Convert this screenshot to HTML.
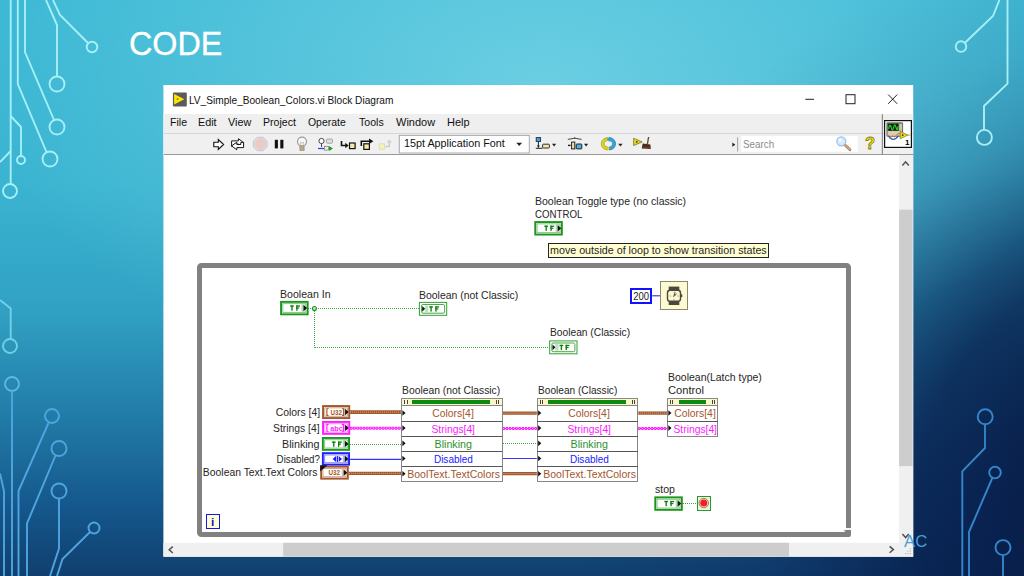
<!DOCTYPE html>
<html><head><meta charset="utf-8"><title>CODE</title>
<style>
html,body{margin:0;padding:0;}
body{width:1024px;height:576px;overflow:hidden;position:relative;font-family:"Liberation Sans",sans-serif;background:#1b6c9c;}
#bg{position:absolute;left:0;top:0;width:1024px;height:576px;background:
 radial-gradient(ellipse 560px 300px at 545px 85px, rgba(150,228,240,0.52) 0%, rgba(150,228,240,0.0) 100%),
 radial-gradient(circle 580px at 1150px 500px, rgba(8,28,72,0.98) 0%, rgba(8,28,72,0.93) 24%, rgba(8,30,76,0.82) 40%, rgba(8,32,80,0.56) 52%, rgba(10,37,88,0.28) 66%, rgba(10,37,88,0.12) 80%, rgba(10,37,88,0) 100%),
 linear-gradient(to bottom, #3db9d5 0%, #3ab4d1 32%, #31a1c3 54%, #227ca8 72%, #15578c 88%, #103f6e 100%);}
.t{position:absolute;white-space:nowrap;line-height:1;font-family:"Liberation Sans",sans-serif;}
svg{position:absolute;left:0;top:0;overflow:visible;}
</style></head><body>
<div id="bg"></div>
<svg width="1024" height="576" viewBox="0 0 1024 576"><path d="M10.7,0 V184" fill="none" stroke="#a6eff7" stroke-width="1.9" stroke-linejoin="miter"/><circle cx="10" cy="191" r="7" fill="none" stroke="#a6eff7" stroke-width="1.9"/><path d="M17.8,0 V84 L46.5,152" fill="none" stroke="#a6eff7" stroke-width="1.9" stroke-linejoin="miter"/><circle cx="50" cy="159" r="7.5" fill="none" stroke="#a6eff7" stroke-width="1.9"/><path d="M25,0 V52 L54,120" fill="none" stroke="#a6eff7" stroke-width="1.9" stroke-linejoin="miter"/><circle cx="57" cy="127" r="7.5" fill="none" stroke="#a6eff7" stroke-width="1.9"/><path d="M46,0 L57,25 V76.5" fill="none" stroke="#a6eff7" stroke-width="1.9" stroke-linejoin="miter"/><circle cx="57" cy="84" r="7.5" fill="none" stroke="#a6eff7" stroke-width="1.9"/><path d="M53,0 L60,15 L88,43" fill="none" stroke="#a6eff7" stroke-width="1.9" stroke-linejoin="miter"/><circle cx="92" cy="47" r="5.3" fill="none" stroke="#a6eff7" stroke-width="1.9"/><path d="M10.7,116 L21,127 V155.5" fill="none" stroke="#a6eff7" stroke-width="1.9" stroke-linejoin="miter"/><circle cx="21" cy="160" r="4" fill="none" stroke="#a6eff7" stroke-width="1.9"/><path d="M10.7,151 L0,162" fill="none" stroke="#a6eff7" stroke-width="1.9" stroke-linejoin="miter"/><path d="M0,300 L10.7,308.5 V339" fill="none" stroke="#6fd0e6" stroke-width="1.9" stroke-linejoin="miter"/><circle cx="10" cy="346" r="7" fill="none" stroke="#6fd0e6" stroke-width="1.9"/><circle cx="12" cy="384" r="7" fill="none" stroke="#5cb8e0" stroke-width="1.9"/><path d="M12,391 V576" fill="none" stroke="#4fa5e0" stroke-width="1.9" stroke-linejoin="miter"/><circle cx="52" cy="416" r="7" fill="none" stroke="#4fa5e0" stroke-width="1.9"/><path d="M48.5,423 L18.5,491 V576" fill="none" stroke="#4fa5e0" stroke-width="1.9" stroke-linejoin="miter"/><circle cx="59" cy="448.5" r="7.5" fill="none" stroke="#4fa5e0" stroke-width="1.9"/><path d="M55.5,455.5 L27,523.5 V576" fill="none" stroke="#4fa5e0" stroke-width="1.9" stroke-linejoin="miter"/><circle cx="59" cy="491" r="7.5" fill="none" stroke="#4fa5e0" stroke-width="1.9"/><path d="M59,498.5 V548.5 L50,576" fill="none" stroke="#4fa5e0" stroke-width="1.9" stroke-linejoin="miter"/><circle cx="94" cy="528" r="5.5" fill="none" stroke="#4fa5e0" stroke-width="1.9"/><path d="M90,532 L62.5,559 L57,576" fill="none" stroke="#4fa5e0" stroke-width="1.9" stroke-linejoin="miter"/><path d="M0,473.5 L4,491 V576" fill="none" stroke="#4fa5e0" stroke-width="1.9" stroke-linejoin="miter"/><path d="M999.4,0 L993,16 L965,42.7" fill="none" stroke="#a6eff7" stroke-width="1.9" stroke-linejoin="miter"/><circle cx="961" cy="46.6" r="5.3" fill="none" stroke="#a6eff7" stroke-width="1.9"/><path d="M1007.5,0 V83.6 L984,106 V130" fill="none" stroke="#a6eff7" stroke-width="1.9" stroke-linejoin="miter"/><circle cx="984.4" cy="137.4" r="7.5" fill="none" stroke="#a6eff7" stroke-width="1.9"/><circle cx="985.2" cy="416.8" r="7.5" fill="none" stroke="#3585c9" stroke-width="1.9"/><path d="M985,424.3 V448 L962.3,471.3 V576" fill="none" stroke="#3585c9" stroke-width="1.9" stroke-linejoin="miter"/><circle cx="995" cy="472.6" r="5.8" fill="none" stroke="#3585c9" stroke-width="1.9"/><path d="M992.3,478 L969,532 V576" fill="none" stroke="#3585c9" stroke-width="1.9" stroke-linejoin="miter"/><circle cx="1003" cy="547.6" r="7.5" fill="none" stroke="#3585c9" stroke-width="1.9"/><path d="M1003,555 V576" fill="none" stroke="#3585c9" stroke-width="1.9" stroke-linejoin="miter"/></svg>
<span class="t" style="left:129.30px;transform-origin:0 0;top:25.90px;font-size:34px;color:#fff;transform:scaleX(0.9498);-webkit-text-stroke:0.35px #fff;">CODE</span>
<svg width="1024" height="576" viewBox="0 0 1024 576"><rect x="163.4" y="85.0" width="749.8" height="471.7" fill="#fff"/><rect x="163.4" y="114.1" width="749.8" height="40" fill="#f0f0f0"/></svg>
<div style="position:absolute;left:164.00px;top:114.20px;width:749.00px;height:18.30px;background:#efefef;"></div>
<div style="position:absolute;left:164.00px;top:132.50px;width:749.00px;height:22.50px;background:#f0f0f0;border-top:1px solid #d6d6d6;border-bottom:1.5px solid #989898;box-sizing:border-box;"></div>
<svg width="1024" height="576" viewBox="0 0 1024 576"><g transform="translate(172.9,92.4)"><rect width="13.9" height="14.1" rx="1" fill="#5b5b5b"/><path d="M1.2,1.5 L11.4,6.8 L1.2,12.1 Z" fill="#ffe600"/><circle cx="4.6" cy="6.7" r="0.95" fill="#77722e"/></g></svg>
<span class="t" style="left:189.30px;transform-origin:0 0;top:95.45px;font-size:11.5px;color:#111;transform:scaleX(0.8789);">LV_Simple_Boolean_Colors.vi Block Diagram</span>
<svg width="1024" height="576" viewBox="0 0 1024 576"><g stroke="#222" stroke-width="1" fill="none"><path d="M805.3,99.3 H814"/><rect x="846" y="94.7" width="9" height="9"/><path d="M888.2,94.6 L897.2,103.8 M897.2,94.6 L888.2,103.8"/></g></svg>
<span class="t" style="left:169.60px;transform-origin:0 0;top:116.85px;font-size:11.5px;color:#111;transform:scaleX(0.9175);">File</span>
<span class="t" style="left:197.70px;transform-origin:0 0;top:116.85px;font-size:11.5px;color:#111;transform:scaleX(0.9386);">Edit</span>
<span class="t" style="left:228.10px;transform-origin:0 0;top:116.85px;font-size:11.5px;color:#111;transform:scaleX(0.9386);">View</span>
<span class="t" style="left:263.10px;transform-origin:0 0;top:116.85px;font-size:11.5px;color:#111;transform:scaleX(0.9192);">Project</span>
<span class="t" style="left:308.30px;transform-origin:0 0;top:116.85px;font-size:11.5px;color:#111;transform:scaleX(0.9074);">Operate</span>
<span class="t" style="left:358.70px;transform-origin:0 0;top:116.85px;font-size:11.5px;color:#111;transform:scaleX(0.9201);">Tools</span>
<span class="t" style="left:395.90px;transform-origin:0 0;top:116.85px;font-size:11.5px;color:#111;transform:scaleX(0.9560);">Window</span>
<span class="t" style="left:446.80px;transform-origin:0 0;top:116.85px;font-size:11.5px;color:#111;transform:scaleX(0.9556);">Help</span>
<svg width="1024" height="576" viewBox="0 0 1024 576"><path d="M213.8,142.3 H218.3 V139.6 L223.6,144.5 L218.3,149.4 V146.7 H213.8 Z" fill="#fff" stroke="#111" stroke-width="1.1"/><g fill="#fff" stroke="#161616" stroke-width="1" stroke-linejoin="miter"><path d="M231.6,146.3 V140.9 H238.4 V138.7 L243.6,142.6 L238.4,146.3 V144 H234.4 V146.3 Z"/><path d="M243.6,142.4 V147.6 H236.8 V149.8 L231.6,145.9 L236.8,142.2 V144.5 H240.8 V142.4 Z"/></g><path d="M257.4,137.3 H263 L267,141.2 V146.8 L263,150.7 H257.4 L253.4,146.8 V141.2 Z" fill="#dcdcdc" stroke="#c2c2c2" stroke-width="0.9"/><circle cx="260.2" cy="144" r="4.7" fill="#efc9c3"/><circle cx="260.2" cy="144" r="4.7" fill="none" stroke="#e8b0a8" stroke-width="0.6" stroke-dasharray="1 1"/><rect x="274.8" y="139.8" width="3.1" height="8.6" fill="#111"/><rect x="280.3" y="139.8" width="3.1" height="8.6" fill="#111"/><g><circle cx="302" cy="141.6" r="4.5" fill="#f6f6f6" stroke="#9a9a9a" stroke-width="1.2"/><path d="M300.6,145 V142 L302,143.4 L303.4,142 V145" fill="none" stroke="#b5b5b5" stroke-width="0.7"/><rect x="299.9" y="146" width="4.2" height="4.4" fill="#c9a57a" stroke="#8f8f8f" stroke-width="0.7"/><rect x="302.6" y="147.4" width="1.2" height="1.2" fill="#6fbf5a"/></g><g><circle cx="321.5" cy="141" r="2.6" fill="#fff" stroke="#333" stroke-width="0.9"/><path d="M321.5,143.6 V147" stroke="#333" stroke-width="0.9"/><rect x="326.5" y="139" width="6" height="4.3" rx="1" fill="#ddd" stroke="#999" stroke-width="0.8"/><path d="M318,148.5 H324" stroke="#2244dd" stroke-width="1.2"/><rect x="324.3" y="146.3" width="4.2" height="3.8" fill="#eee" stroke="#777" stroke-width="0.7"/><path d="M329,146 L333,148.5 L329,151 Z" fill="#1aa01a"/></g><g><path d="M341.5,141 V145.5 H346" fill="none" stroke="#111" stroke-width="1.6"/><path d="M345.3,142.8 L348.6,145.5 L345.3,148.2 Z" fill="#111"/><rect x="349.5" y="143" width="5.6" height="5.6" fill="#f7e9a8" stroke="#111" stroke-width="1.2"/></g><g><path d="M361.3,146 V141.3 H369.5" fill="none" stroke="#111" stroke-width="1.6"/><path d="M369,138.6 L373.4,141.3 L369,144 Z" fill="#111"/><rect x="363.8" y="143.8" width="5.6" height="5.6" fill="#f7e9a8" stroke="#111" stroke-width="1.2"/></g><g opacity="0.9"><rect x="379.3" y="143.8" width="5.4" height="5.4" fill="#f5f3b0" stroke="#d8d8b0" stroke-width="0.8"/><path d="M385.5,146.5 H389.3 V142" fill="none" stroke="#c9c9c9" stroke-width="1.5"/><path d="M386.6,142.6 L389.3,139.6 L392,142.6 Z" fill="#c9c9c9"/></g><rect x="399.3" y="135.4" width="130" height="17.6" fill="#fff" stroke="#a9a9a9" stroke-width="1"/><path d="M516.3,142.8 H522.1 L519.2,146 Z" fill="#222"/><g><rect x="536.2" y="137.6" width="4.4" height="3.8" fill="#39a6e6" stroke="#1a2a44" stroke-width="0.9"/><path d="M538.4,141.6 V147.6" stroke="#222" stroke-width="1"/><path d="M536.9,145.6 L538.4,147.8 L539.9,145.6 Z" fill="#222"/><path d="M535.8,148.3 H542.4" stroke="#222" stroke-width="1"/><rect x="542.6" y="144.2" width="6.8" height="3.8" rx="0.8" fill="#f6e7a6" stroke="#2a2a2a" stroke-width="1"/><path d="M552,143.8 H556.2 L554.1,146.5 Z" fill="#222"/></g><g><path d="M567.8,139.4 q6.9,-2.4 13.8,0" fill="none" stroke="#333" stroke-width="0.9"/><path d="M574.7,137.2 V138.6" stroke="#333" stroke-width="0.9"/><path d="M568,145.4 H570.6" stroke="#222" stroke-width="1.4"/><rect x="571.6" y="142.1" width="3.2" height="6.8" fill="#f6e7a6" stroke="#222" stroke-width="1"/><rect x="576.2" y="144" width="5.6" height="4.9" rx="0.7" fill="#4db2ea" stroke="#222" stroke-width="1"/><path d="M584,143.8 H588.2 L586.1,146.5 Z" fill="#222"/></g><g><path d="M607.6,137.6 a6.4,6.2 0 0 0 0,12.4 l0,-2.9 a3.4,3.3 0 0 1 0,-6.6 z" fill="#d9d21f" stroke="#9a9414" stroke-width="0.6"/><path d="M609.2,137.6 a6.4,6.2 0 0 1 0,12.4 l0,-2.9 a3.4,3.3 0 0 0 0,-6.6 z" fill="#35a4d6" stroke="#1c6f99" stroke-width="0.6"/><path d="M607.2,145.4 l2.6,3 l-2.6,2.6 z" fill="#d9d21f"/><path d="M609.6,142.2 l-2.6,-3 l2.6,-2.6 z" fill="#35a4d6"/><path d="M618.2,143.8 H622.6 L620.4,146.5 Z" fill="#222"/></g><g><path d="M633.6,138.2 L642.2,141.9 L633.6,145.6 Z" fill="#e3d81e" stroke="#6b650f" stroke-width="0.7"/><circle cx="636.8" cy="141.8" r="0.9" fill="#333"/><path d="M648.6,137 L647.4,144" stroke="#6b4a2a" stroke-width="1.4"/><path d="M642.6,143.6 L650.4,144.4 L650.8,149 L641.8,148.6 Z" fill="#4a2e1c"/><path d="M643.5,147.4 h1 m1,0 h1 m1,0 h1 m1,0 h1" stroke="#d8442a" stroke-width="0.9"/></g><path d="M732.3,142.6 L735.3,144.7 L732.3,146.8 Z" fill="#222"/><path d="M737.6,137.3 V151.4" stroke="#999" stroke-width="0.9"/><rect x="741.2" y="136" width="116.7" height="15.8" fill="#fff"/><g><path d="M845,145 L850,149.8" stroke="#8a6a4a" stroke-width="2.6" stroke-linecap="round"/><path d="M845,145 L850,149.8" stroke="#e0b084" stroke-width="1.5" stroke-linecap="round"/><circle cx="841.3" cy="141.3" r="4.5" fill="#d6e9ff" stroke="#9cc3ec" stroke-width="1.3"/><circle cx="840.2" cy="140.2" r="1.6" fill="#fff" opacity=".8"/></g><path d="M882.4,114.2 V155" stroke="#8e8e8e" stroke-width="1.2"/><rect x="884.6" y="120.6" width="26.8" height="26.8" fill="#fff" stroke="#111" stroke-width="1.2"/><rect x="886.4" y="122.3" width="16.7" height="14.4" rx="1.2" fill="#707070"/><rect x="887.6" y="130.9" width="14.4" height="5" fill="#d9cfae"/><rect x="888.2" y="123.7" width="10.2" height="7" fill="#0a200a"/><path d="M888.6,128.8 q1.3,-6.4 2.6,-1.4 t2.4,0 t2.4,0 t2,-1" fill="none" stroke="#25e025" stroke-width="1.1"/><rect x="899.2" y="123.7" width="2.8" height="7" fill="#cfc6a8"/><path d="M888.2,135.6 q5,7.4 10.4,0" fill="none" stroke="#2565c8" stroke-width="1.3"/><path d="M889.6,138.2 l3,-2.4 l2,1.2 l3.4,-3.4 l3,0.6" fill="none" stroke="#e5602a" stroke-width="1"/><path d="M907,135.1 H910.6" stroke="#e5802a" stroke-width="0.9"/><path d="M900.2,131.4 L907.8,135.1 L900.2,138.8 Z" fill="#e6de1c" stroke="#7d7a10" stroke-width="0.7"/><circle cx="902.7" cy="135.1" r="0.9" fill="#333"/></svg>
<span class="t" style="left:404.30px;transform-origin:0 0;top:138.15px;font-size:11.5px;color:#111;transform:scaleX(0.9376);">15pt Application Font</span>
<span class="t" style="left:742.90px;transform-origin:0 0;top:138.80px;font-size:11px;color:#8c8c8c;transform:scaleX(0.8924);">Search</span>
<span class="t" style="left:865.30px;transform-origin:0 0;top:135.05px;font-size:16.5px;color:#f4e600;font-weight:bold;transform:scaleX(1.0022);-webkit-text-stroke:0.8px #858018;">?</span>
<span class="t" style="left:904.50px;transform-origin:0 0;top:139.10px;font-size:8px;color:#000;font-weight:bold;transform:scaleX(1.0115);">1</span>
<svg width="1024" height="576" viewBox="0 0 1024 576"><rect x="163.4" y="542.8" width="749.8" height="13.9" fill="#f0f0f0"/><rect x="899.1" y="155" width="14.1" height="388" fill="#f0f0f0"/><rect x="899.1" y="209.7" width="13.5" height="256.4" fill="#cdcdcd"/><rect x="283.2" y="542.8" width="505.8" height="13.9" fill="#cdcdcd"/></svg>
<svg width="1024" height="576" viewBox="0 0 1024 576"><g fill="none" stroke="#505050" stroke-width="1.5"><path d="M902.4,165.4 L905.6,161.8 L908.8,165.4"/><path d="M902.4,534 L905.6,537.6 L908.8,534"/><path d="M172.8,546.6 L169.2,549.8 L172.8,553"/><path d="M889.6,546.4 L893.4,549.6 L889.6,552.8"/></g><g fill="#bdbdbd"><rect x="909.6" y="553" width="1.2" height="1.2"/><rect x="907.2" y="553" width="1.2" height="1.2"/><rect x="904.8" y="553" width="1.2" height="1.2"/><rect x="909.6" y="550.6" width="1.2" height="1.2"/><rect x="907.2" y="550.6" width="1.2" height="1.2"/><rect x="909.6" y="548.2" width="1.2" height="1.2"/></g></svg>
<span class="t" style="left:903.80px;transform-origin:0 0;top:533.20px;font-size:16.2px;color:#4a9ddb;transform:scaleX(1.0309);">AC</span>
<div style="position:absolute;left:196.80px;top:262.90px;width:653.90px;height:274.40px;box-sizing:border-box;border:5px solid #818181;border-radius:4.5px 4.5px 2px 4.5px;"></div>
<div style="position:absolute;left:845.40px;top:528.00px;width:5.60px;height:1.90px;background:#f4f4f4;"></div>
<svg width="1024" height="576" viewBox="0 0 1024 576"><path d="M843.4,530.2 H846 V532.6 Z" fill="#818181"/></svg>
<div style="position:absolute;left:205.70px;top:514.40px;width:14.20px;height:14.20px;box-sizing:border-box;border:1.9px solid #1414ff;background:#ffffcf;"></div>
<span class="t" style="left:210.90px;transform-origin:0 0;top:516.95px;font-size:11.5px;color:#1414e0;font-weight:bold;transform:scaleX(1.0329);">i</span>
<svg width="1024" height="576" viewBox="0 0 1024 576"><g transform="translate(534.30,221.10)"><rect width="28.5" height="14.4" fill="#1c951c"/><rect x="1.9" y="1.9" width="24.7" height="10.600000000000001" fill="#fff"/><rect x="1.9" y="1.9" width="24.7" height="10.600000000000001" fill="#1c951c" opacity=".10"/><rect x="2.8" y="2.8" width="22.9" height="8.8" fill="none" stroke="#1c951c" stroke-width=".7" opacity=".65"/><rect x="3.5" y="3.6" width="17.9" height="7.2" fill="#fff"/><rect x="21.4" y="3.6" width="3" height="7.2" fill="#1c951c" opacity=".28"/><path d="M23.4,4.1 L27.0,7.2 L23.4,10.3 Z" fill="#111"/><g fill="#0d7d0d"><rect x="10.0" y="4.5" width="3.7" height="1.3"/><rect x="11.200000000000001" y="4.5" width="1.35" height="5.3"/><rect x="16.1" y="4.5" width="1.35" height="5.3"/><rect x="16.1" y="4.5" width="3.8" height="1.3"/><rect x="16.1" y="6.55" width="3.0" height="1.2"/></g></g></svg>
<svg width="1024" height="576" viewBox="0 0 1024 576"><g transform="translate(280.10,300.90)"><rect width="28.5" height="14.4" fill="#1c951c"/><rect x="1.9" y="1.9" width="24.7" height="10.600000000000001" fill="#fff"/><rect x="1.9" y="1.9" width="24.7" height="10.600000000000001" fill="#1c951c" opacity=".10"/><rect x="2.8" y="2.8" width="22.9" height="8.8" fill="none" stroke="#1c951c" stroke-width=".7" opacity=".65"/><rect x="3.5" y="3.6" width="17.9" height="7.2" fill="#fff"/><rect x="21.4" y="3.6" width="3" height="7.2" fill="#1c951c" opacity=".28"/><path d="M23.4,4.1 L27.0,7.2 L23.4,10.3 Z" fill="#111"/><g fill="#0d7d0d"><rect x="10.0" y="4.5" width="3.7" height="1.3"/><rect x="11.200000000000001" y="4.5" width="1.35" height="5.3"/><rect x="16.1" y="4.5" width="1.35" height="5.3"/><rect x="16.1" y="4.5" width="3.8" height="1.3"/><rect x="16.1" y="6.55" width="3.0" height="1.2"/></g></g></svg>
<svg width="1024" height="576" viewBox="0 0 1024 576"><g transform="translate(418.90,301.90)"><rect x=".5" y=".5" width="27.3" height="12.9" fill="#fff" stroke="#1c951c" stroke-width="1" opacity=".9"/><rect x="2.6" y="2.6" width="23.1" height="8.7" rx="1.4" fill="#fff" stroke="#1c951c" stroke-width="1" opacity=".8"/><rect x="6" y="3.6" width="3.4" height="6.7" fill="#1c951c" opacity=".28"/><path d="M3.3,4.1 L6.2,6.95 L3.3,9.8 Z" fill="#111"/><g fill="#0d7d0d"><rect x="10.299999999999999" y="4.4" width="3.7" height="1.3"/><rect x="11.5" y="4.4" width="1.35" height="5.3"/><rect x="16.4" y="4.4" width="1.35" height="5.3"/><rect x="16.4" y="4.4" width="3.8" height="1.3"/><rect x="16.4" y="6.45" width="3.0" height="1.2"/></g></g></svg>
<svg width="1024" height="576" viewBox="0 0 1024 576"><g transform="translate(549.20,340.40)"><rect x=".5" y=".5" width="27.3" height="12.9" fill="#fff" stroke="#1c951c" stroke-width="1" opacity=".9"/><rect x="2.6" y="2.6" width="23.1" height="8.7" rx="1.4" fill="#fff" stroke="#1c951c" stroke-width="1" opacity=".8"/><rect x="6" y="3.6" width="3.4" height="6.7" fill="#1c951c" opacity=".28"/><path d="M3.3,4.1 L6.2,6.95 L3.3,9.8 Z" fill="#111"/><g fill="#0d7d0d"><rect x="10.299999999999999" y="4.4" width="3.7" height="1.3"/><rect x="11.5" y="4.4" width="1.35" height="5.3"/><rect x="16.4" y="4.4" width="1.35" height="5.3"/><rect x="16.4" y="4.4" width="3.8" height="1.3"/><rect x="16.4" y="6.45" width="3.0" height="1.2"/></g></g></svg>
<svg width="1024" height="576" viewBox="0 0 1024 576"><g transform="translate(654.30,496.40)"><rect width="28.5" height="14.4" fill="#1c951c"/><rect x="1.9" y="1.9" width="24.7" height="10.600000000000001" fill="#fff"/><rect x="1.9" y="1.9" width="24.7" height="10.600000000000001" fill="#1c951c" opacity=".10"/><rect x="2.8" y="2.8" width="22.9" height="8.8" fill="none" stroke="#1c951c" stroke-width=".7" opacity=".65"/><rect x="3.5" y="3.6" width="17.9" height="7.2" fill="#fff"/><rect x="21.4" y="3.6" width="3" height="7.2" fill="#1c951c" opacity=".28"/><path d="M23.4,4.1 L27.0,7.2 L23.4,10.3 Z" fill="#111"/><g fill="#0d7d0d"><rect x="10.0" y="4.5" width="3.7" height="1.3"/><rect x="11.200000000000001" y="4.5" width="1.35" height="5.3"/><rect x="16.1" y="4.5" width="1.35" height="5.3"/><rect x="16.1" y="4.5" width="3.8" height="1.3"/><rect x="16.1" y="6.55" width="3.0" height="1.2"/></g></g></svg>
<svg width="1024" height="576" viewBox="0 0 1024 576"><g transform="translate(322.10,405.10)"><rect width="28.1" height="13.9" fill="#a3562b"/><rect x="1.9" y="1.9" width="24.3" height="10.100000000000001" fill="#fff"/><rect x="1.9" y="1.9" width="24.3" height="10.100000000000001" fill="#a3562b" opacity=".10"/><rect x="2.8" y="2.8" width="22.5" height="8.3" fill="none" stroke="#a3562b" stroke-width=".7" opacity=".65"/><rect x="3.5" y="3.6" width="17.5" height="6.7" fill="#fff"/><rect x="21.0" y="3.6" width="3" height="6.7" fill="#a3562b" opacity=".28"/><path d="M23.0,3.85 L26.6,6.95 L23.0,10.05 Z" fill="#111"/><g fill="none" stroke="#a3562b" stroke-width="1.1"><path d="M6.4,3.6 H4.8 V10.3 H6.4"/><path d="M19.900000000000002,3.6 H21.5 V10.3 H19.900000000000002"/></g></g></svg>
<span class="t" style="left:330.06px;transform-origin:50% 0;top:409.70px;font-size:6.8px;color:#a3562b;font-weight:bold;transform:scaleX(0.9219);">U32</span>
<svg width="1024" height="576" viewBox="0 0 1024 576"><g transform="translate(322.10,421.00)"><rect width="28.1" height="13.8" fill="#ff19ff"/><rect x="1.9" y="1.9" width="24.3" height="10.0" fill="#fff"/><rect x="1.9" y="1.9" width="24.3" height="10.0" fill="#ff19ff" opacity=".10"/><rect x="2.8" y="2.8" width="22.5" height="8.200000000000001" fill="none" stroke="#ff19ff" stroke-width=".7" opacity=".65"/><rect x="3.5" y="3.6" width="17.5" height="6.6000000000000005" fill="#fff"/><rect x="21.0" y="3.6" width="3" height="6.6000000000000005" fill="#ff19ff" opacity=".28"/><path d="M23.0,3.8000000000000003 L26.6,6.9 L23.0,10.0 Z" fill="#111"/><g fill="none" stroke="#ff19ff" stroke-width="1.1"><path d="M6.4,3.6 H4.8 V10.200000000000001 H6.4"/><path d="M19.900000000000002,3.6 H21.5 V10.200000000000001 H19.900000000000002"/></g></g></svg>
<span class="t" style="left:329.65px;transform-origin:50% 0;top:425.20px;font-size:7.6px;color:#ff19ff;font-weight:bold;transform:scaleX(0.9546);">abc</span>
<svg width="1024" height="576" viewBox="0 0 1024 576"><g transform="translate(321.90,437.00)"><rect width="28.1" height="13.8" fill="#1c951c"/><rect x="1.9" y="1.9" width="24.3" height="10.0" fill="#fff"/><rect x="1.9" y="1.9" width="24.3" height="10.0" fill="#1c951c" opacity=".10"/><rect x="2.8" y="2.8" width="22.5" height="8.200000000000001" fill="none" stroke="#1c951c" stroke-width=".7" opacity=".65"/><rect x="3.5" y="3.6" width="17.5" height="6.6000000000000005" fill="#fff"/><rect x="21.0" y="3.6" width="3" height="6.6000000000000005" fill="#1c951c" opacity=".28"/><path d="M23.0,3.8000000000000003 L26.6,6.9 L23.0,10.0 Z" fill="#111"/><g fill="#0d7d0d"><rect x="10.0" y="4.5" width="3.7" height="1.3"/><rect x="11.200000000000001" y="4.5" width="1.35" height="5.3"/><rect x="16.1" y="4.5" width="1.35" height="5.3"/><rect x="16.1" y="4.5" width="3.8" height="1.3"/><rect x="16.1" y="6.55" width="3.0" height="1.2"/></g></g></svg>
<svg width="1024" height="576" viewBox="0 0 1024 576"><g transform="translate(321.90,452.20)"><rect width="28.1" height="13.4" fill="#1f1fff"/><rect x="1.9" y="1.9" width="24.3" height="9.600000000000001" fill="#fff"/><rect x="1.9" y="1.9" width="24.3" height="9.600000000000001" fill="#1f1fff" opacity=".10"/><rect x="2.8" y="2.8" width="22.5" height="7.800000000000001" fill="none" stroke="#1f1fff" stroke-width=".7" opacity=".65"/><rect x="3.5" y="3.6" width="17.5" height="6.2" fill="#fff"/><rect x="21.0" y="3.6" width="3" height="6.2" fill="#1f1fff" opacity=".28"/><path d="M23.0,3.6 L26.6,6.7 L23.0,9.8 Z" fill="#111"/></g></svg>
<svg width="1024" height="576" viewBox="0 0 1024 576"><g transform="translate(320.20,465.70)"><rect width="28.6" height="13.9" fill="#a3562b"/><rect x="1.9" y="1.9" width="24.8" height="10.100000000000001" fill="#fff"/><rect x="1.9" y="1.9" width="24.8" height="10.100000000000001" fill="#a3562b" opacity=".10"/><rect x="2.8" y="2.8" width="23.0" height="8.3" fill="none" stroke="#a3562b" stroke-width=".7" opacity=".65"/><rect x="3.5" y="3.6" width="18.0" height="6.7" fill="#fff"/><rect x="21.5" y="3.6" width="3" height="6.7" fill="#a3562b" opacity=".28"/><path d="M23.5,3.85 L27.1,6.95 L23.5,10.05 Z" fill="#111"/></g></svg>
<span class="t" style="left:328.36px;transform-origin:50% 0;top:470.40px;font-size:6.8px;color:#a3562b;font-weight:bold;transform:scaleX(0.9219);">U32</span>
<svg width="1024" height="576" viewBox="0 0 1024 576"><path d="M320.2,465.2 H327.4 L320.2,471.4 Z" fill="#111"/><g fill="#1a1aff"><path d="M336,456.1 V461.9 L332.6,459 Z"/><rect x="336.7" y="456.1" width="1.3" height="5.8"/><path d="M338.7,456.1 V461.9 L342,459 Z"/></g></svg>
<svg width="1024" height="576" viewBox="0 0 1024 576"><path d="M308,308.5 H419" fill="none" stroke="#3fa53f" stroke-width="1" stroke-dasharray="1 1"/><path d="M314.5,311 V348" fill="none" stroke="#3fa53f" stroke-width="1" stroke-dasharray="1 1"/><path d="M315,347.5 H549.2" fill="none" stroke="#3fa53f" stroke-width="1" stroke-dasharray="1 1"/><circle cx="314.4" cy="308.5" r="2" fill="#bfe6bf" stroke="#1c951c" stroke-width="1.1"/><path d="M683,503.5 H697.4" fill="none" stroke="#3fa53f" stroke-width="1" stroke-dasharray="1 1"/><path d="M652.2,295.8 H660" stroke="#2a2aff" stroke-width="1.1"/><path d="M350.1,412.1 H401.2" stroke="#a3562b" stroke-width="3.8"/><path d="M350.1,412.1 H401.2" stroke="#e2b9a0" stroke-width="0.9" stroke-dasharray="1 1"/><path d="M350.1,428.2 H401.2" stroke="#ff19ff" stroke-width="1.2"/><path d="M350.1,428.2 H401.2" stroke="#ff19ff" stroke-width="3" stroke-dasharray="2.3 0.9"/><path d="M350.1,428.2 H401.2" stroke="#ffc4ff" stroke-width="1" stroke-dasharray="0.9 2.3" stroke-dashoffset="-0.7"/><path d="M350,444.5 H401.2" fill="none" stroke="#3fa53f" stroke-width="1" stroke-dasharray="1 1"/><path d="M350.1,459.4 H401.2" stroke="#3535ff" stroke-width="1.1"/><path d="M348.8,473.3 H401.2" stroke="#a3562b" stroke-width="3.3"/><path d="M348.8,473.3 H401.2" stroke="#e2b9a0" stroke-width="0.9" stroke-dasharray="1 1"/><path d="M502.5,413.1 H536.8" stroke="#a3562b" stroke-width="3.3"/><path d="M502.5,413.1 H536.8" stroke="#e2b9a0" stroke-width="0.9" stroke-dasharray="1 1"/><path d="M502.5,428.5 H536.8" stroke="#ff19ff" stroke-width="1.2"/><path d="M502.5,428.5 H536.8" stroke="#ff19ff" stroke-width="3" stroke-dasharray="2.3 0.9"/><path d="M502.5,428.5 H536.8" stroke="#ffc4ff" stroke-width="1" stroke-dasharray="0.9 2.3" stroke-dashoffset="-0.7"/><path d="M503,443.5 H536.8" fill="none" stroke="#3fa53f" stroke-width="1" stroke-dasharray="1 1"/><path d="M502.5,458.5 H536.8" stroke="#3535ff" stroke-width="1.1"/><path d="M502.5,473.6 H536.8" stroke="#a3562b" stroke-width="3.1"/><path d="M502.5,473.6 H536.8" stroke="#e2b9a0" stroke-width="0.9" stroke-dasharray="1 1"/><path d="M638.2,413.1 H667.2" stroke="#a3562b" stroke-width="3.3"/><path d="M638.2,413.1 H667.2" stroke="#e2b9a0" stroke-width="0.9" stroke-dasharray="1 1"/><path d="M638.2,428.5 H667.2" stroke="#ff19ff" stroke-width="1.2"/><path d="M638.2,428.5 H667.2" stroke="#ff19ff" stroke-width="3" stroke-dasharray="2.3 0.9"/><path d="M638.2,428.5 H667.2" stroke="#ffc4ff" stroke-width="1" stroke-dasharray="0.9 2.3" stroke-dashoffset="-0.7"/></svg>
<div style="position:absolute;left:630.40px;top:287.50px;width:22.10px;height:16.90px;box-sizing:border-box;border:2px solid #1212ff;background:#fff;"></div>
<span class="t" style="left:632.22px;transform-origin:50% 0;top:291.30px;font-size:11px;color:#222;transform:scaleX(0.8610);">200</span>
<div style="position:absolute;left:659.90px;top:281.20px;width:28.40px;height:28.80px;box-sizing:border-box;border:1.2px solid #8c8672;background:#fcfad0;"><svg width="28" height="29" viewBox="0 0 28 29"><rect x="7.7" y="4.6" width="10.6" height="4" fill="#4b4641"/><rect x="7.7" y="19" width="10.6" height="4" fill="#4b4641"/><rect x="6.5" y="8.3" width="13" height="11" rx="2.6" fill="#fcfad0" stroke="#4b4641" stroke-width="1.4"/><rect x="19.9" y="12.3" width="1.4" height="2.8" fill="#4b4641"/><path d="M12.6,14.8 L14.2,10.2 M13.2,14.2 L15.6,11.6" stroke="#3a3632" stroke-width="0.9" fill="none"/><path d="M8.6,14 h1.2 M16.4,14 h1.2 M13,17.9 v-1 M13,10.6 v-0.8" stroke="#6a655c" stroke-width="0.7"/></svg></div>
<div style="position:absolute;left:697.20px;top:496.10px;width:14.10px;height:14.70px;box-sizing:border-box;border:1.3px solid #2a9a2a;background:#f1f0d4;"><svg width="12" height="12" viewBox="0 0 12 12"><circle cx="5.75" cy="6.05" r="4.7" fill="#efe8d2" stroke="#6d6a64" stroke-width="0.8"/><circle cx="5.75" cy="6.05" r="3.5" fill="#fb1c1c"/></svg></div>
<div style="position:absolute;left:401.00px;top:398.20px;width:101.50px;height:7.60px;box-sizing:border-box;border:1px solid #8a8a8a;background:#fbf7c8;"><div style="position:absolute;left:10.4px;right:11.299999999999997px;top:1.1px;bottom:1.1px;background:#0e8a0e"></div><div style="position:absolute;left:2.4px;top:0.8px;width:3.2px;height:4.2px;border-left:1px solid #444;border-right:1px solid #444;box-sizing:border-box"></div><div style="position:absolute;right:2.4px;top:0.8px;width:3.2px;height:4.2px;border-left:1px solid #444;border-right:1px solid #444;box-sizing:border-box"></div></div>
<div style="position:absolute;left:401.00px;top:405.40px;width:101.50px;height:76.95px;box-sizing:border-box;border:1px solid #858585;background:#fff;"></div>
<svg width="1024" height="576" viewBox="0 0 1024 576"><path transform="translate(402.40,410.20)" d="M0,0 L3.2,2.8 L0,5.6 Z" fill="#111"/></svg>
<span class="t" style="left:431.34px;transform-origin:50% 0;top:408.40px;font-size:11px;color:#a3562b;transform:scaleX(0.9429);">Colors[4]</span>
<div style="position:absolute;left:401.50px;top:420.50px;width:100.50px;height:1.00px;background:#555;"></div>
<svg width="1024" height="576" viewBox="0 0 1024 576"><path transform="translate(402.40,425.30)" d="M0,0 L3.2,2.8 L0,5.6 Z" fill="#111"/></svg>
<span class="t" style="left:430.12px;transform-origin:50% 0;top:423.50px;font-size:11px;color:#ff19ff;transform:scaleX(0.9362);">Strings[4]</span>
<div style="position:absolute;left:401.50px;top:435.75px;width:100.50px;height:1.00px;background:#555;"></div>
<svg width="1024" height="576" viewBox="0 0 1024 576"><path transform="translate(402.40,440.55)" d="M0,0 L3.2,2.8 L0,5.6 Z" fill="#111"/></svg>
<span class="t" style="left:434.09px;transform-origin:50% 0;top:438.75px;font-size:11px;color:#2f8f2f;transform:scaleX(0.9735);">Blinking</span>
<div style="position:absolute;left:401.50px;top:450.95px;width:100.50px;height:1.00px;background:#555;"></div>
<svg width="1024" height="576" viewBox="0 0 1024 576"><path transform="translate(402.40,455.75)" d="M0,0 L3.2,2.8 L0,5.6 Z" fill="#111"/></svg>
<span class="t" style="left:431.95px;transform-origin:50% 0;top:453.95px;font-size:11px;color:#2222ff;transform:scaleX(0.9112);">Disabled</span>
<div style="position:absolute;left:401.50px;top:466.15px;width:100.50px;height:1.00px;background:#555;"></div>
<svg width="1024" height="576" viewBox="0 0 1024 576"><path transform="translate(402.40,470.95)" d="M0,0 L3.2,2.8 L0,5.6 Z" fill="#111"/></svg>
<span class="t" style="left:404.75px;transform-origin:50% 0;top:469.15px;font-size:11px;color:#a3562b;transform:scaleX(0.9537);">BoolText.TextColors</span>
<div style="position:absolute;left:536.70px;top:398.20px;width:101.80px;height:7.60px;box-sizing:border-box;border:1px solid #8a8a8a;background:#fbf7c8;"><div style="position:absolute;left:10.4px;right:11.599999999999994px;top:1.1px;bottom:1.1px;background:#0e8a0e"></div><div style="position:absolute;left:2.4px;top:0.8px;width:3.2px;height:4.2px;border-left:1px solid #444;border-right:1px solid #444;box-sizing:border-box"></div><div style="position:absolute;right:2.4px;top:0.8px;width:3.2px;height:4.2px;border-left:1px solid #444;border-right:1px solid #444;box-sizing:border-box"></div></div>
<div style="position:absolute;left:536.70px;top:405.40px;width:101.80px;height:76.95px;box-sizing:border-box;border:1px solid #858585;background:#fff;"></div>
<svg width="1024" height="576" viewBox="0 0 1024 576"><path transform="translate(538.10,410.20)" d="M0,0 L3.2,2.8 L0,5.6 Z" fill="#111"/></svg>
<span class="t" style="left:567.19px;transform-origin:50% 0;top:408.40px;font-size:11px;color:#a3562b;transform:scaleX(0.9429);">Colors[4]</span>
<div style="position:absolute;left:537.20px;top:420.50px;width:100.80px;height:1.00px;background:#555;"></div>
<svg width="1024" height="576" viewBox="0 0 1024 576"><path transform="translate(538.10,425.30)" d="M0,0 L3.2,2.8 L0,5.6 Z" fill="#111"/></svg>
<span class="t" style="left:565.97px;transform-origin:50% 0;top:423.50px;font-size:11px;color:#ff19ff;transform:scaleX(0.9362);">Strings[4]</span>
<div style="position:absolute;left:537.20px;top:435.75px;width:100.80px;height:1.00px;background:#555;"></div>
<svg width="1024" height="576" viewBox="0 0 1024 576"><path transform="translate(538.10,440.55)" d="M0,0 L3.2,2.8 L0,5.6 Z" fill="#111"/></svg>
<span class="t" style="left:569.94px;transform-origin:50% 0;top:438.75px;font-size:11px;color:#2f8f2f;transform:scaleX(0.9735);">Blinking</span>
<div style="position:absolute;left:537.20px;top:450.95px;width:100.80px;height:1.00px;background:#555;"></div>
<svg width="1024" height="576" viewBox="0 0 1024 576"><path transform="translate(538.10,455.75)" d="M0,0 L3.2,2.8 L0,5.6 Z" fill="#111"/></svg>
<span class="t" style="left:567.80px;transform-origin:50% 0;top:453.95px;font-size:11px;color:#2222ff;transform:scaleX(0.9112);">Disabled</span>
<div style="position:absolute;left:537.20px;top:466.15px;width:100.80px;height:1.00px;background:#555;"></div>
<svg width="1024" height="576" viewBox="0 0 1024 576"><path transform="translate(538.10,470.95)" d="M0,0 L3.2,2.8 L0,5.6 Z" fill="#111"/></svg>
<span class="t" style="left:540.60px;transform-origin:50% 0;top:469.15px;font-size:11px;color:#a3562b;transform:scaleX(0.9537);">BoolText.TextColors</span>
<div style="position:absolute;left:666.90px;top:398.20px;width:51.40px;height:7.60px;box-sizing:border-box;border:1px solid #8a8a8a;background:#fbf7c8;"><div style="position:absolute;left:10.7px;right:10.799999999999997px;top:1.1px;bottom:1.1px;background:#0e8a0e"></div><div style="position:absolute;left:2.4px;top:0.8px;width:3.2px;height:4.2px;border-left:1px solid #444;border-right:1px solid #444;box-sizing:border-box"></div><div style="position:absolute;right:2.4px;top:0.8px;width:3.2px;height:4.2px;border-left:1px solid #444;border-right:1px solid #444;box-sizing:border-box"></div></div>
<div style="position:absolute;left:666.90px;top:405.40px;width:51.40px;height:31.35px;box-sizing:border-box;border:1px solid #858585;background:#fff;"></div>
<svg width="1024" height="576" viewBox="0 0 1024 576"><path transform="translate(668.30,410.20)" d="M0,0 L3.2,2.8 L0,5.6 Z" fill="#111"/></svg>
<span class="t" style="left:672.79px;transform-origin:50% 0;top:408.40px;font-size:11px;color:#a3562b;transform:scaleX(0.9429);">Colors[4]</span>
<div style="position:absolute;left:667.40px;top:420.50px;width:50.40px;height:1.00px;background:#555;"></div>
<svg width="1024" height="576" viewBox="0 0 1024 576"><path transform="translate(668.30,425.30)" d="M0,0 L3.2,2.8 L0,5.6 Z" fill="#111"/></svg>
<span class="t" style="left:671.57px;transform-origin:50% 0;top:423.50px;font-size:11px;color:#ff19ff;transform:scaleX(0.9362);">Strings[4]</span>
<span class="t" style="left:534.90px;transform-origin:0 0;top:195.50px;font-size:11px;color:#262626;transform:scaleX(0.9554);">Boolean Toggle type (no classic)</span>
<span class="t" style="left:534.90px;transform-origin:0 0;top:208.70px;font-size:11px;color:#262626;transform:scaleX(0.8814);">CONTROL</span>
<div style="position:absolute;left:547.90px;top:242.50px;width:220.90px;height:15.10px;box-sizing:border-box;border:1px solid #222;background:#ffffd2;"></div>
<span class="t" style="left:549.50px;transform-origin:0 0;top:244.90px;font-size:11px;color:#262626;transform:scaleX(0.9737);">move outside of loop to show transition states</span>
<span class="t" style="left:280.20px;transform-origin:0 0;top:288.80px;font-size:11px;color:#262626;transform:scaleX(0.9602);">Boolean In</span>
<span class="t" style="left:419.10px;transform-origin:0 0;top:289.60px;font-size:11px;color:#262626;transform:scaleX(0.9489);">Boolean (not Classic)</span>
<span class="t" style="left:550.30px;transform-origin:0 0;top:327.10px;font-size:11px;color:#262626;transform:scaleX(0.9293);">Boolean (Classic)</span>
<span class="t" style="left:401.80px;transform-origin:0 0;top:385.40px;font-size:11px;color:#262626;transform:scaleX(0.9393);">Boolean (not Classic)</span>
<span class="t" style="left:538.20px;transform-origin:0 0;top:384.70px;font-size:11px;color:#262626;transform:scaleX(0.9200);">Boolean (Classic)</span>
<span class="t" style="left:667.60px;transform-origin:0 0;top:372.20px;font-size:11px;color:#262626;transform:scaleX(0.9528);">Boolean(Latch type)</span>
<span class="t" style="left:667.60px;transform-origin:0 0;top:384.70px;font-size:11px;color:#262626;transform:scaleX(1.0153);">Control</span>
<span class="t" style="left:655.10px;transform-origin:0 0;top:484.10px;font-size:11px;color:#262626;transform:scaleX(0.9572);">stop</span>
<span class="t" style="left:272.53px;transform-origin:100% 0;top:407.20px;font-size:11px;color:#262626;transform:scaleX(0.9433);">Colors [4]</span>
<span class="t" style="left:270.08px;transform-origin:100% 0;top:422.90px;font-size:11px;color:#262626;transform:scaleX(0.9390);">Strings [4]</span>
<span class="t" style="left:281.08px;transform-origin:100% 0;top:438.50px;font-size:11px;color:#262626;transform:scaleX(0.9735);">Blinking</span>
<span class="t" style="left:270.68px;transform-origin:100% 0;top:454.10px;font-size:11px;color:#262626;transform:scaleX(0.8852);">Disabled?</span>
<span class="t" style="left:196.43px;transform-origin:100% 0;top:467.20px;font-size:11px;color:#262626;transform:scaleX(0.9435);">Boolean Text.Text Colors</span>
</body></html>
